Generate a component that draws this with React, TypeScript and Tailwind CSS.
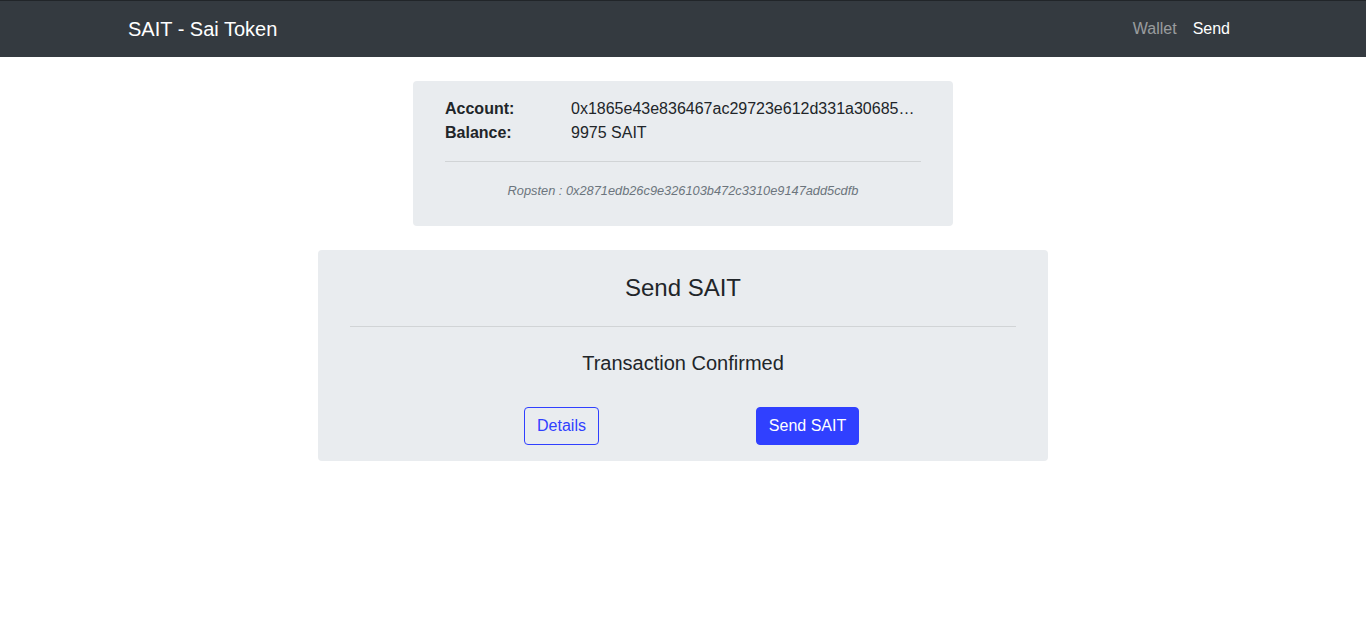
export default function App() {
  return (
    <div className="min-h-[639px] bg-white text-[#212529]" style={{ fontFamily: '"Liberation Sans", Arial, sans-serif' }}>
      {/* Navbar */}
      <nav className="h-[57px] bg-[#343a40] border-t border-[#212529]">
        <div className="mx-auto flex h-full w-[1140px] items-center justify-between px-[15px] pb-[1px]">
          <span className="text-[20px] leading-[30px] text-white">SAIT - Sai Token</span>
          <div className="flex text-[16px] leading-[24px]">
            <a className="px-2 text-white/50">Wallet</a>
            <a className="px-2 text-white">Send</a>
          </div>
        </div>
      </nav>

      <div className="flex flex-col items-center">
        {/* Account card */}
        <div className="mt-6 w-[540px] rounded bg-[#e9ecef] px-8 pt-4 pb-[25px]">
          <div className="flex text-[16px] leading-[24px]">
            <span className="w-[126px] shrink-0 font-bold">Account:</span>
            <span className="min-w-0 truncate">0x1865e43e836467ac29723e612d331a30685c5e7f2a</span>
          </div>
          <div className="flex text-[16px] leading-[24px]">
            <span className="w-[126px] shrink-0 font-bold">Balance:</span>
            <span>9975 SAIT</span>
          </div>
          <hr className="mt-4 mb-[19px] border-t border-black/10" />
          <p className="text-center text-[12.8px] leading-[20px] italic text-[#6c757d]">
            Ropsten : 0x2871edb26c9e326103b472c3310e9147add5cdfb
          </p>
        </div>

        {/* Send card */}
        <div className="mt-6 w-[730px] rounded bg-[#e9ecef] px-8 pt-6 pb-4">
          <h4 className="text-center text-[24px] leading-[28px]">Send SAIT</h4>
          <hr className="mt-[24px] border-t border-black/10" />
          <h5 className="mt-6 text-center text-[20px] leading-[24px]">Transaction Confirmed</h5>
          <div className="mt-8 ml-[3px] flex justify-center">
            <div className="flex w-[246px] justify-center">
              <button className="h-[38px] w-[75px] rounded border border-[#3040ff] text-[16px] text-[#3040ff]">Details</button>
            </div>
            <div className="flex w-[246px] justify-center">
              <button className="h-[38px] w-[103px] rounded border border-[#3040ff] bg-[#3040ff] text-[16px] text-white">Send SAIT</button>
            </div>
          </div>
        </div>
      </div>
    </div>
  );
}
